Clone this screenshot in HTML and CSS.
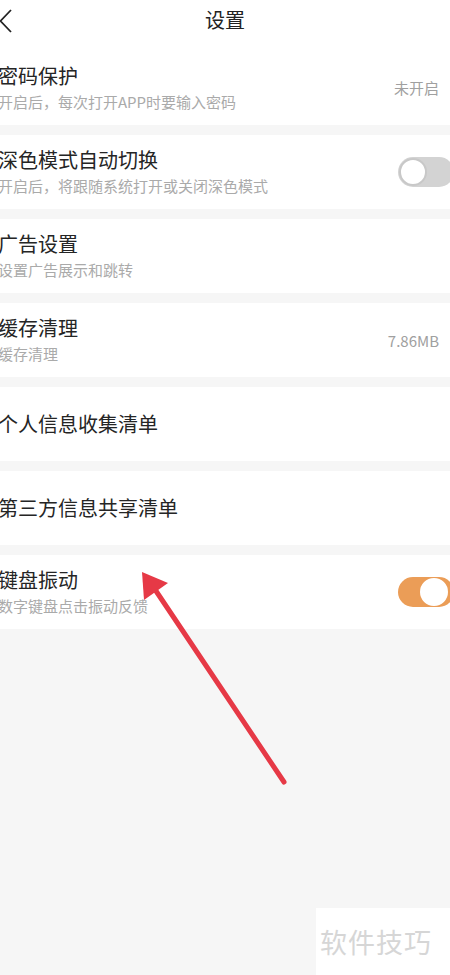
FILE: index.html
```html
<!DOCTYPE html>
<html lang="zh-CN">
<head>
  <meta charset="UTF-8" />
  <title>设置</title>
  <link rel="stylesheet" href="styles.css">
</head>
<body>

<div class="screen">

  <!-- Top bar -->
  <div class="topbar">
    <svg class="back" width="14" height="24" viewBox="0 0 14 24">
      <path d="M12 1 L1.5 12 L12 23" fill="none" stroke="#222" stroke-width="1.8" />
    </svg>
    <div class="topbar-title">设置</div>
  </div>

  <div class="list">
    <div class="row first">
      <div class="row-text">
        <div class="row-title">密码保护</div>
        <div class="row-sub">开启后，每次打开APP时要输入密码</div>
      </div>
      <div class="row-right">
        <span class="value">未开启</span>
        <span class="chev"></span>
      </div>
    </div>

    <div class="row">
      <div class="row-text">
        <div class="row-title">深色模式自动切换</div>
        <div class="row-sub">开启后，将跟随系统打开或关闭深色模式</div>
      </div>
      <div class="toggle"><span class="knob"></span></div>
    </div>

    <div class="row">
      <div class="row-text">
        <div class="row-title">广告设置</div>
        <div class="row-sub">设置广告展示和跳转</div>
      </div>
      <div class="row-right"><span class="chev"></span></div>
    </div>

    <div class="row">
      <div class="row-text">
        <div class="row-title">缓存清理</div>
        <div class="row-sub">缓存清理</div>
      </div>
      <div class="row-right">
        <span class="value">7.86MB</span>
        <span class="chev hidden"></span>
      </div>
    </div>

    <div class="row">
      <div class="row-text">
        <div class="row-title">个人信息收集清单</div>
      </div>
      <div class="row-right"><span class="chev"></span></div>
    </div>

    <div class="row">
      <div class="row-text">
        <div class="row-title">第三方信息共享清单</div>
      </div>
      <div class="row-right"><span class="chev"></span></div>
    </div>

    <div class="row">
      <div class="row-text">
        <div class="row-title">键盘振动</div>
        <div class="row-sub">数字键盘点击振动反馈</div>
      </div>
      <div class="toggle on"><span class="knob"></span></div>
    </div>
  </div>

  <!-- annotation arrow -->
  <svg class="arrow" width="450" height="975" viewBox="0 0 450 975">
    <line x1="284" y1="782" x2="152" y2="585" stroke="#e63946" stroke-width="5" stroke-linecap="round" />
    <polygon points="142,572 168,583 144,600" fill="#e63946" />
  </svg>

  <div class="watermark">软件技巧</div>
</div>

</body>
</html>
```

FILE: styles.css
```css
body {
  margin: 0;
  background: #f6f6f6;
  font-family: "Noto Sans CJK SC", "Noto Sans", sans-serif;
  overflow: hidden;
}
.screen {
  width: 450px;
  height: 975px;
  position: relative;
  overflow: hidden;
  background: #f6f6f6;
}
.topbar {
  height: 50px;
  background: #fff;
  position: relative;
  display: flex;
  justify-content: center;
}
.back {
  position: absolute;
  left: -1px;
  top: 9px;
}
.topbar-title {
  font-size: 20px;
  line-height: 40px;
  color: #222;
}
.list {
  display: flex;
  flex-direction: column;
  gap: 10px;
}
.row {
  height: 74px;
  background: #fff;
  display: flex;
  align-items: center;
  justify-content: space-between;
}
.row.first {
  height: 75px;
}
.row-text {
  margin-left: -2px;
  display: flex;
  flex-direction: column;
  gap: 2px;
}
.row-title {
  font-size: 20px;
  line-height: 26px;
  color: #252525;
}
.row-sub {
  font-size: 15px;
  line-height: 22px;
  color: #aaa;
}
.row-right {
  display: flex;
  align-items: center;
  gap: 8px;
  margin-right: -6px;
}
.value {
  font-size: 15px;
  color: #a0a0a0;
}
.chev {
  width: 8px;
  height: 8px;
  border-top: 1.5px solid #bbb;
  border-right: 1.5px solid #bbb;
  transform: rotate(45deg);
}
.chev.hidden {
  border-color: #ddd;
}
.toggle {
  width: 56px;
  height: 30px;
  border-radius: 15px;
  background: #d3d3d3;
  margin-right: -4px;
  position: relative;
  flex-shrink: 0;
}
.knob {
  position: absolute;
  top: 1px;
  left: 1px;
  width: 24px;
  height: 24px;
  border-radius: 50%;
  background: #fff;
  border: 2px solid #c8c8c8;
}
.toggle.on {
  background: #eb9d57;
}
.toggle.on .knob {
  left: auto;
  right: 6px;
  border-color: #fff;
}
.arrow {
  position: absolute;
  left: 0;
  top: 0;
  pointer-events: none;
}
.watermark {
  position: absolute;
  left: 316px;
  top: 908px;
  width: 134px;
  height: 67px;
  background: #fff;
  color: #d6d6d6;
  font-size: 27px;
  line-height: 67px;
  padding-left: 4px;
  box-sizing: border-box;
  letter-spacing: 1px;
}
```
